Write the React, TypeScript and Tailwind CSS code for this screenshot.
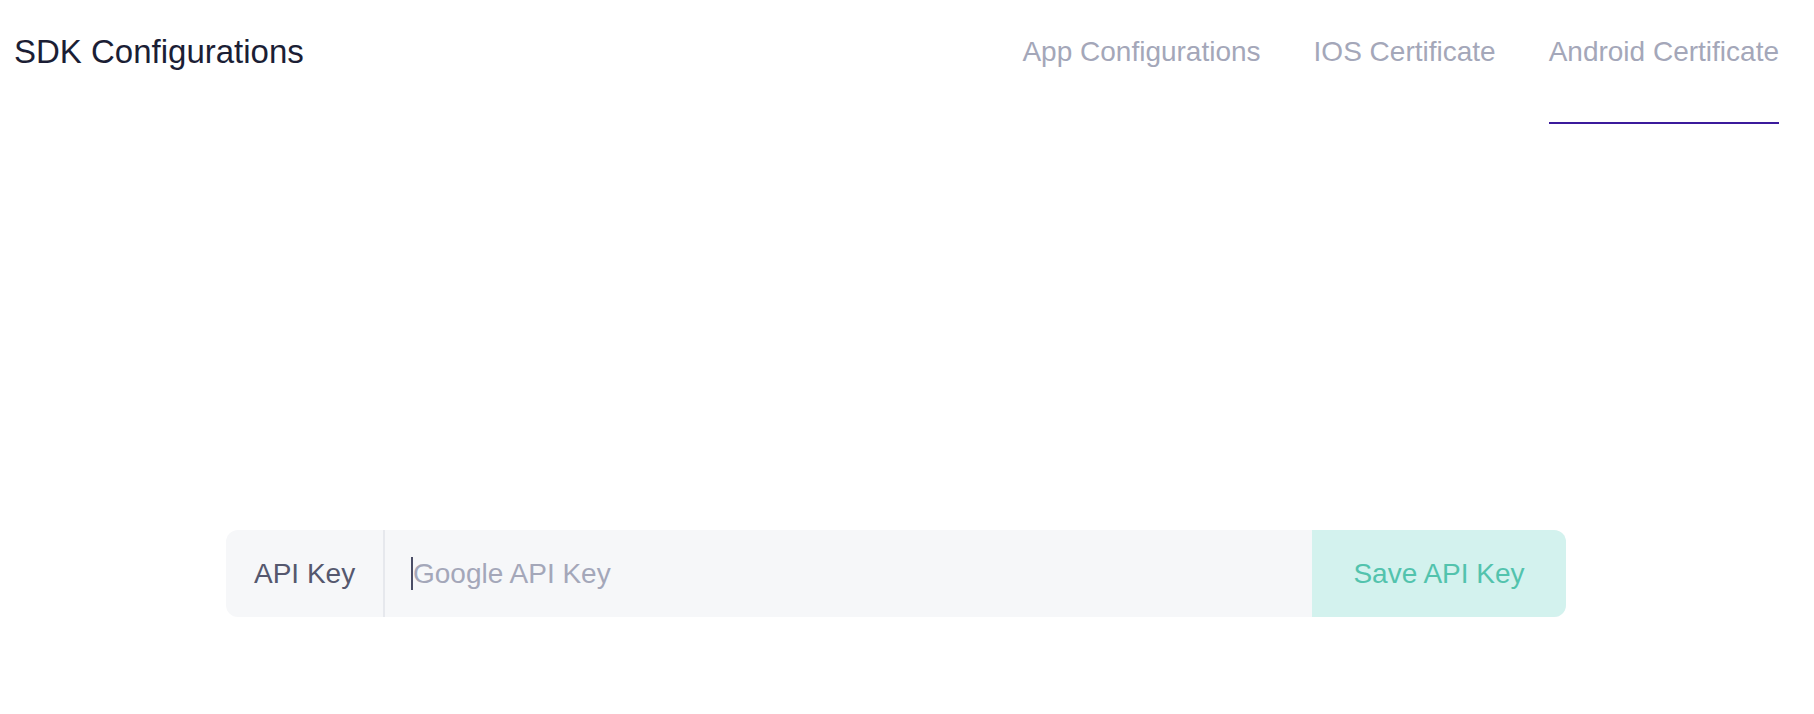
import React from 'react';

const tabs = ['App Configurations', 'IOS Certificate', 'Android Certificate'];

export default function App() {
  const active = 'Android Certificate';

  return (
    <div className="min-h-[714px] w-full bg-white font-['Liberation_Sans',Arial,sans-serif]">
      <div className="flex items-start justify-between pl-[14px] pr-[35px] pt-[35px]">
        <h1 className="text-[33px] leading-none font-normal text-[#1b1e35]">SDK Configurations</h1>
        <nav className="mt-[3px] flex items-start gap-[53px]">
          {tabs.map((tab) => (
            <button
              key={tab}
              className={
                tab === active
                  ? 'text-[28px] leading-none text-[#a4a7b9] pb-[56px] border-b-2 border-[#3b1a9c]'
                  : 'text-[28px] leading-none text-[#a4a7b9] pb-[56px] border-b-2 border-transparent'
              }
            >
              {tab}
            </button>
          ))}
        </nav>
      </div>

      <div className="ml-[226px] mt-[406px] flex h-[87px] w-[1340px] items-stretch rounded-[12px] bg-[#f6f7f9]">
        <div className="flex w-[159px] items-center border-r-2 border-[#e6e8ed] pl-[28px] text-[28px] text-[#55586e]">
          API Key
        </div>
        <div className="flex flex-1 items-center pl-[26px]">
          <span className="h-[33px] w-[2px] bg-[#4a4d66]" />
          <input
            type="text"
            placeholder="Google API Key"
            className="w-full bg-transparent text-[28px] text-[#55586e] placeholder:text-[#a4a7b9] outline-none caret-transparent"
          />
        </div>
        <button className="w-[254px] rounded-r-[12px] bg-[#d3f2ee] text-[28px] text-[#52c3ad]">
          Save API Key
        </button>
      </div>
    </div>
  );
}
